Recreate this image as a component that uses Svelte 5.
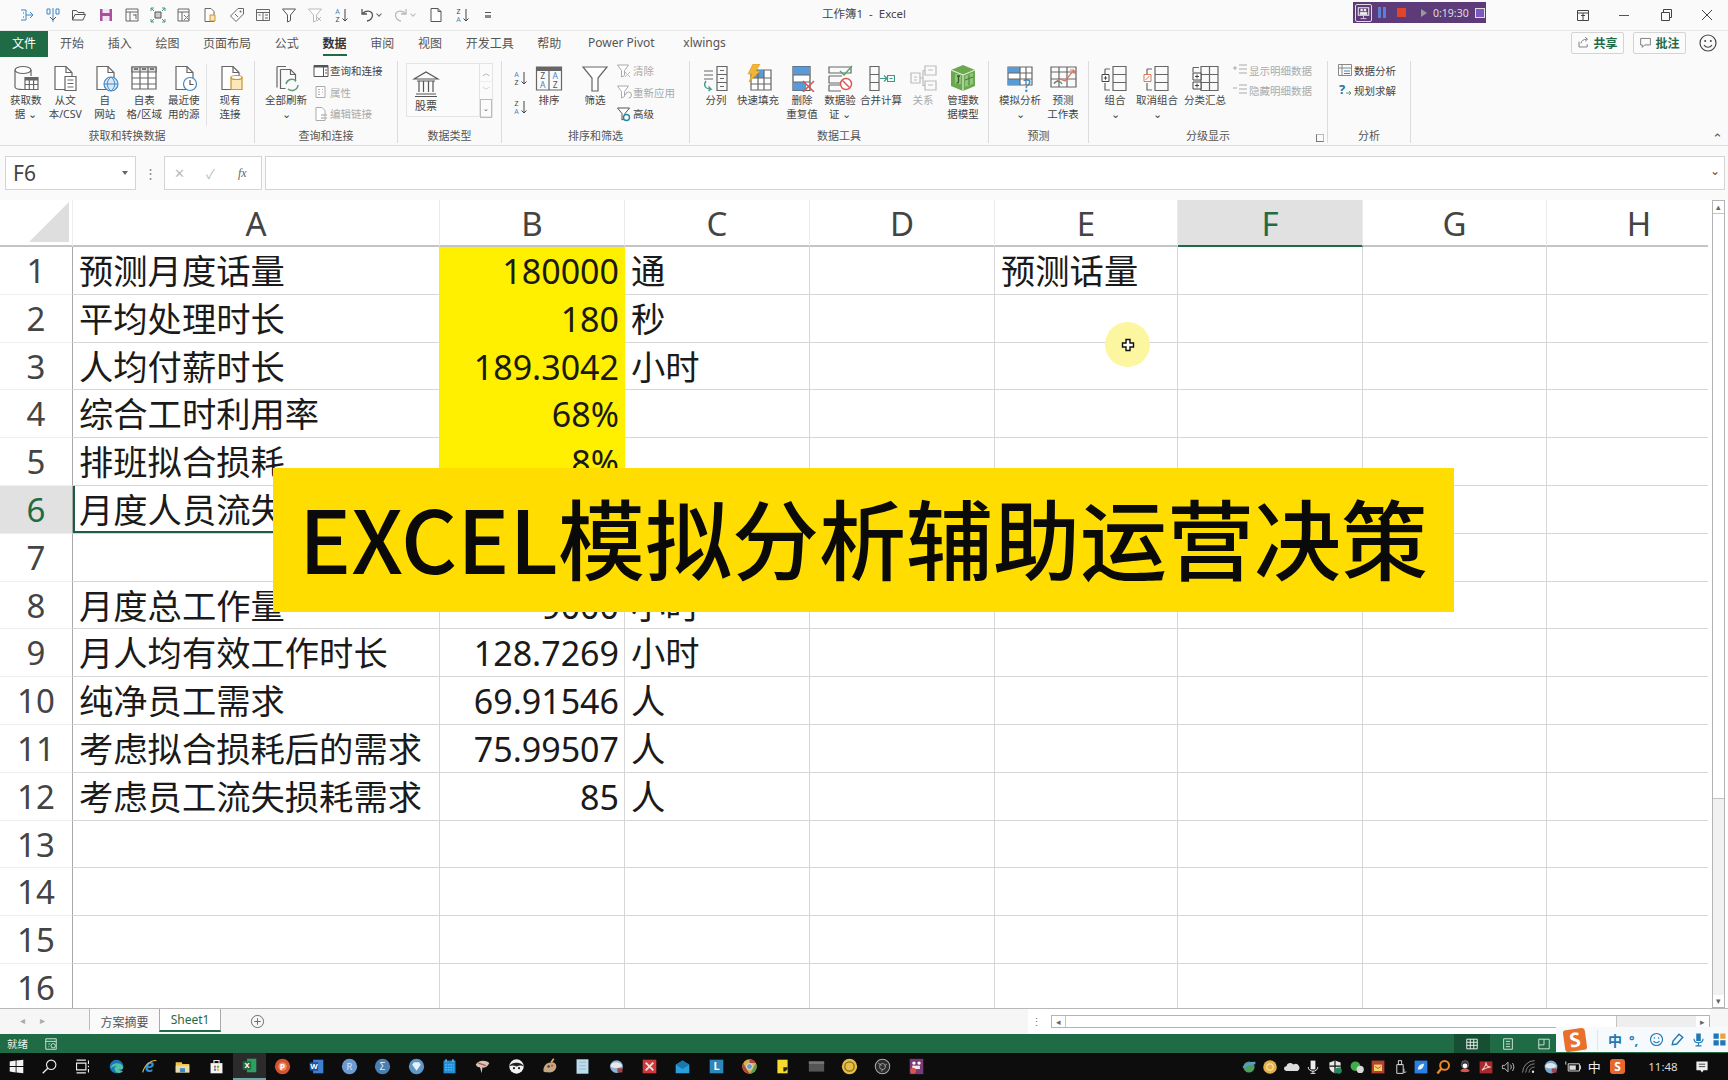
<script>
  const line = 'fill="none" stroke="#666" stroke-width="1.2"';
  const doc = `<path d="M6 2.5h11l6 6v17H6z" fill="#fff" stroke="#666" stroke-width="1.2"/><path d="M17 2.500v6h6" ${line}/>`;

  const lg = {
    getdata: `<ellipse cx="11" cy="6" rx="8" ry="3.500" fill="#fff" stroke="#666" stroke-width="1.2"/><path d="M3 6v17c0 1.500 3 2.500 8 2.500h2M19 6v6" ${line}/><path d="M13 13.500h13v12H13z" fill="#fff" stroke="#666" stroke-width="1.2"/><path d="M13 13.500h13v3H13z" fill="#666"/><path d="M13 20.500h13M17.300 16v9.500M21.600 16v9.500" ${line}/>`,
    text: `<path d="M4 2.500h11l6 6v17H4z" fill="#fff" stroke="#666" stroke-width="1.2"/><path d="M15 2.500v6h6" ${line}/><path d="M14 12.500h11v14H14z" fill="#fff" stroke="#666" stroke-width="1.200"/><path d="M16.500 16h6M16.500 19.500h6M16.500 23h6" ${line}/>`,
    web: `${doc}<circle cx="20" cy="20" r="7" fill="#dbe9f6" stroke="#3f88c5" stroke-width="1.200"/><path d="M13 20h14M20 13c-5 4-5 10 0 14M20 13c5 4 5 10 0 14" fill="none" stroke="#3f88c5" stroke-width="1"/>`,
    table: `<path d="M2 3h24v22H2z" fill="#fff" stroke="#666" stroke-width="1.200"/><path d="M2 3h24v5H2z" fill="#ddd" stroke="#666" stroke-width="1.200"/><path d="M2 14h24M2 20h24M10 3v22M18 3v22" ${line}/><path d="M4 5h4M12 5h4M20 5h4" stroke="#555" stroke-width="1.500"/>`,
    recent: `${doc}<circle cx="20" cy="20" r="6.500" fill="#fff" stroke="#3f88c5" stroke-width="1.200"/><path d="M20 16v4.500h3.500" fill="none" stroke="#555" stroke-width="1.200"/>`,
    existing: `${doc}<path d="M15 13.500h11v12H15z" fill="#fbe7b8" stroke="#c9962f" stroke-width="1.200"/><ellipse cx="20.500" cy="13.500" rx="5.500" ry="2" fill="#fff" stroke="#c9962f" stroke-width="1.200"/>`,
    refresh: `<path d="M5 2.500h9M5 2.500v21M8.500 5.500h10l5 5v7M8.500 5.500v19h5" ${line}/><path d="M18.500 5.500v5h5" ${line}/><path d="M14 20a6 6 0 0 1 10-3M26 21a6 6 0 0 1-10 4" fill="none" stroke="#5a9e6f" stroke-width="1.500"/>`,
    sort: `<path d="M1.500 3h25v23h-25zM1.500 6.500h25M14 6.500v19.500" ${line}/><path d="M1.500 3h25v3.500h-25z" fill="#666"/><text x="7.700" y="15" text-anchor="middle" font-size="8.500" font-family="Noto Sans" fill="#555">Z</text><text x="7.700" y="24" text-anchor="middle" font-size="8.500" font-family="Noto Sans" fill="#3f88c5">A</text><text x="20.300" y="15" text-anchor="middle" font-size="8.500" font-family="Noto Sans" fill="#3f88c5">A</text><text x="20.300" y="24" text-anchor="middle" font-size="8.500" font-family="Noto Sans" fill="#555">Z</text>`,
    filter: `<path d="M2 3h24L17 14v13h-6V14z" fill="#fff" stroke="#666" stroke-width="1.200"/>`,
    split: `<path d="M2 7h9M2 11h9M2 15h9" ${line}/><path d="M15 2.500h10v24H15zM15 10.500h10M15 18.500h10" ${line}/><path d="M18 6.500h4M18 14.500h4M18 22.500h4" stroke="#666" stroke-width="1"/><path d="M4 17c-3 4-1 8 5 8l-2.500-2.500M9 25l-2.500 2" fill="none" stroke="#3f9a86" stroke-width="1.300"/>`,
    flash: `<path d="M7 6h20v20H7z" fill="#fff" stroke="#666" stroke-width="1.200"/><path d="M7 6h13v8H7z" fill="#5b9bd5"/><path d="M7 14h20M7 20h20M14 6v20M20 6v20" ${line}/><path d="M9 0h7l-4 7h4L5 18l3-8H4z" fill="#f2b632" stroke="#d69a1b" stroke-width=".6"/>`,
    dedupe: `<path d="M5 2.500h17v24H5z" fill="#fff" stroke="#555" stroke-width="1.200"/><path d="M5 2.500h17v8.500H5zM5 18h13v8.500H5z" fill="#5b9bd5"/><path d="M5 11h17M5 18h17" ${line}/><path d="M15 17l11 11M26 17L15 28" stroke="#d9534f" stroke-width="1.500"/>`,
    validate: `<path d="M3 3h22v6H3zM3 12h13M3 12v7h13M3 21h13M3 21v6h12" ${line}/><path d="M14 7l4 4 8-9" fill="none" stroke="#5a9e6f" stroke-width="1.400"/><circle cx="20" cy="20" r="5.500" fill="#fff" stroke="#d9534f" stroke-width="1.400"/><path d="M16.500 16.500l7 7" stroke="#d9534f" stroke-width="1.400"/>`,
    consolidate: `<path d="M3 2.500h9v8H3zM3 10.500h9v8H3zM3 18.500h9v8H3z" ${line}/><path d="M13 14.500h7M17 11.500l3 3-3 3" fill="none" stroke="#3f9a86" stroke-width="1.200"/><path d="M20.500 11.500h7v6h-7zM22.500 14.500h3" fill="none" stroke="#3f9a86" stroke-width="1.200"/>`,
    relation: `<path d="M16 2h11v9H16zM16 17h11v9H16zM2 9h9v10H2zM11 14h3M14 6.500v15h2M14 6.500h2M19 6h5M19 21h5M5 13h3M5 16h3" fill="none" stroke="#bbb" stroke-width="1.200"/>`,
    model: `<path d="M14 1l12 5v16l-12 5-12-5V6z" fill="#6aa84f"/><path d="M2 6l12 5v16M26 6l-12 5" fill="none" stroke="#dcecd2" stroke-width="1.200"/><path d="M16 12l8-3v11l-8 3zM6 10h6v10H6z" fill="#93c47d"/><path d="M16 16l8-3M20 11v10" stroke="#3e7a2e" stroke-width="1"/><path d="M8 12h3M9.500 12v6c0 1-1 1-2 1" fill="none" stroke="#2e5c22" stroke-width="1.300"/>`,
    whatif: `<path d="M2 3h24v18H2z" fill="#fff" stroke="#666" stroke-width="1.200"/><path d="M2 3h12v6H2zM2 15h12v6H2z" fill="#5b9bd5"/><path d="M2 9h24M2 15h24M14 3v18M20 3v18" ${line}/><text x="21" y="28" text-anchor="middle" font-size="18" font-family="Noto Sans" fill="#3f88c5">?</text>`,
    forecast: `<path d="M2 3h25v20H2zM2 8h25M2 15h25M10 3v20M18 3v20" ${line}/><path d="M5 19l6-4 5 2 9-11" fill="none" stroke="#d9765f" stroke-width="1.200"/><path d="M25 6h-4M25 6v4" stroke="#d9765f" stroke-width="1.200"/><path d="M5 20c2-4 7-3 8 0" fill="none" stroke="#3f9a86" stroke-width="1.300"/>`,
    group: `<path d="M12 2.500h13v24H12zM12 10.500h13M12 18.500h13M4 5h5M4 5v9M4 19v7h5" ${line}/><path d="M1 10.500h7v7H1zM2.800 14h3.400M4.500 12.200v3.600" fill="#fff" stroke="#444" stroke-width="1"/>`,
    ungroup: `<path d="M12 2.500h13v24H12zM12 10.500h13M12 18.500h13M4 5h5M4 5v9M4 19v7h5" ${line}/><path d="M1 10.500h7v7H1z" fill="#fff" stroke="#d9765f" stroke-width="1"/><path d="M2.500 16l4-4" stroke="#d9765f" stroke-width="1"/>`,
    subtotal: `<path d="M10 2.500h17v24H10zM10 10.500h17M10 18.500h17M18.500 2.500v24M2 3.500h6M2 3.500v5" ${line}/><path d="M2 9h8v7H2zM2 18h8v7H2z" fill="#fff" stroke="#444" stroke-width="1"/><path d="M4 12.500h4M6 10.500v4M4 21.500h4M6 19.500v4" stroke="#444" stroke-width="1"/>`
  };

  const sm = {
    query: `<path d="M1 2.500h14v11H1z" fill="#fff" stroke="#555"/><path d="M1 2.500h14v2H1z" fill="#555"/><path d="M10.500 4v9M12 7h2M12 10h2" stroke="#555"/>`,
    props: `<path d="M3 2.500h9v11H3z" fill="#fff" stroke="#aaa"/><path d="M5 5.500h2M5 8h2M5 10.500h2M9 5.500h1M9 8h1" stroke="#aaa"/>`,
    links: `<path d="M3 1.500h6l3 3v10H3z" fill="#fff" stroke="#aaa"/><path d="M8 9h6M8 12h6" stroke="#bbb" stroke-width="1.500"/>`,
    clear: `<path d="M1.500 2h11l-4 5.500v5l-3 1.500V7.500z" fill="#fff" stroke="#aaa"/><path d="M9 9l5 5M14 9l-5 5" stroke="#bbb"/>`,
    reapply: `<path d="M1.500 2h11l-4 5.500v5l-3 1.500V7.500z" fill="#fff" stroke="#aaa"/><path d="M9.500 11a3 3 0 1 1 3 3" fill="none" stroke="#aaa"/>`,
    advanced: `<path d="M1.500 2h12l-4.500 5.500v5l-3 1.500V7.500z" fill="#fff" stroke="#555"/><circle cx="10.500" cy="11.500" r="3" fill="#fff" stroke="#1f8a9e" stroke-width="1.400"/>`,
    show: `<path d="M1 6h4M3 4v4M7 3h8M7 7h8M7 11h8" stroke="#aaa"/>`,
    hide: `<path d="M1 6h4M7 3h8M7 7h8M7 11h8" stroke="#aaa"/>`,
    analysis: `<path d="M1.500 2.500h13v11h-13zM5 2.500v11M1.500 6h13" fill="none" stroke="#888"/><path d="M7 8.500h6v1H7zM7 11h6v1H7z" fill="#3f88c5"/>`,
    solver: `<text x="5" y="12" text-anchor="middle" font-size="13" font-weight="700" font-family="Noto Sans" fill="#2f6fa8">?</text><path d="M9 11h5M12 9l2 2-2 2" fill="none" stroke="#5a9e6f"/>`
  };

  const azSort = `<text x="4.500" y="7" text-anchor="middle" font-size="7" font-family="Noto Sans" fill="#3f88c5">A</text><text x="4.500" y="14.500" text-anchor="middle" font-size="7" font-family="Noto Sans" fill="#444">Z</text><path d="M12 2v12M9.500 11.500l2.500 2.500 2.500-2.500" fill="none" stroke="#444"/>`;
  const zaSort = `<text x="4.500" y="7" text-anchor="middle" font-size="7" font-family="Noto Sans" fill="#444">Z</text><text x="4.500" y="14.500" text-anchor="middle" font-size="7" font-family="Noto Sans" fill="#3f88c5">A</text><path d="M12 2v12M9.500 11.500l2.500 2.500 2.500-2.500" fill="none" stroke="#444"/>`;

  const qat = [
    `<path d="M2 3h5v10H2M7 8h7M11 5l3 3-3 3" fill="none" stroke="#3f88c5"/><path d="M4 6h1M4 10h1" stroke="#555"/>`,
    `<path d="M8 1v14M2 2h3v5H2zM11 2h3v5h-3z" fill="none" stroke="#3f88c5"/><path d="M5 10l3 3 3-3" fill="none" stroke="#555"/>`,
    `<path d="M1.500 13V3.500h4l1.500 2h6v2M1.500 13h10.500l2.500-5.500H4z" fill="none" stroke="#555"/>`,
    `<path d="M2 2h12v12H2z" fill="#a8509f"/><path d="M4.500 2h7v4h-7zM4.500 9h7v5h-7z" fill="#f3e6f2"/>`,
    `<path d="M2 2h12v12H2zM2 5h12M6 5v9M9 8h3v4M12 8v-1" fill="none" stroke="#666"/>`,
    `<path d="M5 5h6v6H5z" fill="#ccc" stroke="#555"/><path d="M1 1l3 3M15 1l-3 3M1 15l3-3M15 15l-3-3M1 1v3M1 1h3M15 1v3M15 1h-3M1 15v-3M1 15h3M15 15v-3M15 15h-3" fill="none" stroke="#3f9a86"/>`,
    `<path d="M2 2h11v12H2zM2 5h11M6 5v9" fill="none" stroke="#666"/><path d="M8 8l5 5M13 8l-5 5" stroke="#3f88c5"/>`,
    `<path d="M3 1.500h6l3 3v10H3z" fill="#fff" stroke="#666"/><path d="M8 8h5v6H8z" fill="#fbe7b8" stroke="#c9962f"/>`,
    `<path d="M9 1.500h5.500V7L7 14.500 1.500 9z" fill="none" stroke="#666"/><circle cx="11.500" cy="4.500" r="1" fill="#666"/><path d="M6 7l3 3" stroke="#666"/>`,
    `<path d="M1.500 2.500h13v11h-13zM1.500 5.500h13M8 5.500v8M3.500 8h2M10 8h3M10 11h3" fill="none" stroke="#666"/>`,
    `<path d="M1.500 2h13L9.500 8v5.500l-3 1.500V8z" fill="#fff" stroke="#555"/>`,
    `<path d="M1.500 2h13L9.500 8v5.500l-3 1.500V8z" fill="#fff" stroke="#bbb"/><path d="M10 10l4 4M14 10l-4 4" stroke="#bbb"/>`,
    azSort
  ];
  const undo = `<path d="M3 2v5h5M3.500 7C6 3 13 3 13.500 8c.3 3-2.500 5.500-5.500 6" fill="none" stroke="#555" stroke-width="1.300"/>`;
  const redo = `<path d="M13 2v5H8M12.500 7C10 3 3 3 2.500 8c-.3 3 2.500 5.500 5.500 6" fill="none" stroke="#bbb" stroke-width="1.300"/>`;
  const newDoc = `<path d="M3 1.500h7l3 3v10H3zM10 1.500v3h3" fill="#fff" stroke="#555"/>`;
  const bank = `<path d="M2 10L14 3l12 7zM4 25h20M3 27.500h22M7 12v11M11.500 12v11M16.500 12v11M21 12v11M5 12h18" fill="none" stroke="#555" stroke-width="1.200"/>`;

  const tabs = ['开始', '插入', '绘图', '页面布局', '公式', '数据', '审阅', '视图', '开发工具', '帮助', 'Power Pivot', 'xlwings'];

  const groups = [
    { label: '获取和转换数据', width: 255, pad: 6, items: [
      { icon: 'getdata', text: '获取数', text2: '据 ⌄', w: 39.5 },
      { icon: 'text', text: '从文', text2: '本/CSV', w: 39.5 },
      { icon: 'web', text: '自', text2: '网站', w: 39.5 },
      { icon: 'table', text: '自表', text2: '格/区域', w: 39.5 },
      { icon: 'recent', text: '最近使', text2: '用的源', w: 39.5 },
      { kind: 'sep' },
      { icon: 'existing', text: '现有', text2: '连接', w: 41 }
    ] },
    { label: '查询和连接', width: 143, pad: 8, items: [
      { icon: 'refresh', text: '全部刷新', text2: '⌄', w: 46 },
      { kind: 'col', left: 4, rows: [
        { icon: 'query', text: '查询和连接' },
        { icon: 'props', text: '属性', off: true },
        { icon: 'links', text: '编辑链接', off: true }
      ] }
    ] },
    { label: '数据类型', width: 104, pad: 8, items: [{ kind: 'gallery' }] },
    { label: '排序和筛选', width: 188, pad: 8, items: [
      { kind: 'sortcol' },
      { icon: 'sort', text: '排序', w: 38 },
      { icon: 'filter', text: '筛选', w: 38, left: 8 },
      { kind: 'col', left: 2, rows: [
        { icon: 'clear', text: '清除', off: true },
        { icon: 'reapply', text: '重新应用', off: true },
        { icon: 'advanced', text: '高级' }
      ] }
    ] },
    { label: '数据工具', width: 299, pad: 10, items: [
      { icon: 'split', text: '分列', w: 32 },
      { icon: 'flash', text: '快速填充', w: 52 },
      { icon: 'dedupe', text: '删除', text2: '重复值', w: 36 },
      { icon: 'validate', text: '数据验', text2: '证 ⌄', w: 40 },
      { icon: 'consolidate', text: '合并计算', w: 42 },
      { icon: 'relation', text: '关系', w: 42, off: true },
      { icon: 'model', text: '管理数', text2: '据模型', w: 38 }
    ] },
    { label: '预测', width: 100, pad: 8, items: [
      { icon: 'whatif', text: '模拟分析', text2: '⌄', w: 46 },
      { icon: 'forecast', text: '预测', text2: '工作表', w: 40 }
    ] },
    { label: '分级显示', width: 239, pad: 8, launcher: true, items: [
      { icon: 'group', text: '组合', text2: '⌄', w: 36 },
      { icon: 'ungroup', text: '取消组合', text2: '⌄', w: 48 },
      { icon: 'subtotal', text: '分类汇总', w: 48 },
      { kind: 'col', left: 3, tight: true, rows: [
        { icon: 'show', text: '显示明细数据', off: true },
        { icon: 'hide', text: '隐藏明细数据', off: true }
      ] }
    ] },
    { label: '分析', width: 83, pad: 9, items: [
      { kind: 'col', tight: true, rows: [
        { icon: 'analysis', text: '数据分析' },
        { icon: 'solver', text: '规划求解' }
      ] }
    ] }
  ];

  const cols = ['A', 'B', 'C', 'D', 'E', 'F', 'G', 'H'];
  const rows = [
    ['预测月度话量', '180000', '通', '', '预测话量'],
    ['平均处理时长', '180', '秒'],
    ['人均付薪时长', '189.3042', '小时'],
    ['综合工时利用率', '68%'],
    ['排班拟合损耗', '8%'],
    ['月度人员流失率', '10%'],
    [],
    ['月度总工作量', '9000', '小时'],
    ['月人均有效工作时长', '128.7269', '小时'],
    ['纯净员工需求', '69.91546', '人'],
    ['考虑拟合损耗后的需求', '75.99507', '人'],
    ['考虑员工流失损耗需求', '85', '人'],
    [], [], [], []
  ];

  const t = (s, c = '#fff', size = 11, w = 700) =>
    `<text x="10" y="14" text-anchor="middle" font-size="${size}" font-weight="${w}" font-family="Noto Sans" fill="${c}">${s}</text>`;

  const taskbar = [
    `<path d="M2 4l7-1v6.500H2zM10 2.800L18 2v7.500h-8zM2 10.500h7V17l-7-1zM10 10.500h8V18l-8-1z" fill="#f2f2f2"/>`,
    `<circle cx="12" cy="8" r="5.500" fill="none" stroke="#eee" stroke-width="1.300"/><path d="M8 12l-6 6" stroke="#eee" stroke-width="1.500"/>`,
    `<path d="M3 6h11v8H3zM3 2.500h11M3 17.500h11M17 3v4M17 9v2M17 13v4" fill="none" stroke="#eee" stroke-width="1.300"/>`,
    `<circle cx="10" cy="10" r="8" fill="#1976b8"/><path d="M3 12c1-7 13-8 15-1 0 2-3 3-5 2 1 3 3 3 5 2-3 4-9 3-10-1-1-2 0-4 3-5-3 0-6 1-8 3z" fill="#4fc3a1"/>`,
    `<text x="10" y="17" text-anchor="middle" font-size="20" font-weight="700" font-style="italic" font-family="Noto Sans" fill="#2f8fd8">e</text><path d="M2 17C4 8 12 2 18 3" fill="none" stroke="#e8b93c" stroke-width="1.300"/>`,
    `<path d="M2 5h7l1 2h8v10H2z" fill="#f5c542"/><path d="M2 9h16v8H2z" fill="#e8dcae"/><path d="M7 12h6v5H7z" fill="#3f88c5"/>`,
    `<path d="M3 6h14v12H3z" fill="#f4f4f4"/><path d="M7 6V3h6v3" fill="none" stroke="#eee" stroke-width="1.300"/><path d="M7 9h2.500v2.500H7z" fill="#e8613c"/><path d="M10.500 9H13v2.500h-2.500z" fill="#6fb33f"/><path d="M7 12.500h2.500V15H7z" fill="#3f88c5"/><path d="M10.500 12.500H13V15h-2.500z" fill="#f2b632"/>`,
    `<path d="M7 2h11v16H7z" fill="#2f9e63"/><path d="M2 5h10v10H2z" fill="#1e6b45"/><text x="7" y="13.500" text-anchor="middle" font-size="9" font-weight="700" font-family="Noto Sans" fill="#fff">X</text>`,
    `<circle cx="10" cy="10" r="9" fill="#d2552f"/><circle cx="10" cy="10" r="5" fill="#f08a5d"/>${t('P', '#fff', 10)}`,
    `<path d="M6 2h12v16H6z" fill="#3f7fd0"/><path d="M2 5h10v10H2z" fill="#1d4f9e"/><text x="7" y="13.500" text-anchor="middle" font-size="9" font-weight="700" font-family="Noto Sans" fill="#fff">W</text>`,
    `<circle cx="10" cy="10" r="9" fill="#6d9bd1"/>${t('R', '#dbe7f5', 11, 400)}`,
    `<circle cx="10" cy="10" r="9" fill="#4a7fb0"/>${t('Σ', '#dbe7f5', 12, 400)}`,
    `<circle cx="10" cy="10" r="9" fill="#5f97c7"/><path d="M5 8l2-3h6l2 3-5 7z" fill="#e8f1f8"/>`,
    `<path d="M3 3h14v15H3z" fill="#1f8fd8"/><path d="M6 1.500v3M14 1.500v3" stroke="#9fd3f5" stroke-width="1.500"/><path d="M5 8h10M5 11h10M5 14h10" stroke="#8cc8f0" stroke-dasharray="2 1"/>`,
    `<path d="M2 8c3-6 12-6 16-2-2 5-6 6-8 5l-1 7-2-7c-2 0-4-1-5-3z" fill="#d9c3b8"/><path d="M5 6l9 3" stroke="#c0504d" stroke-width="1.500"/>`,
    `<circle cx="10" cy="10" r="8.500" fill="#f2f2f2"/><path d="M1.500 10C3 4 17 4 18.500 10c-3-2-5-1-8.500 0-3-1-5.500-2-8.500 0z" fill="#222"/><circle cx="7" cy="12" r="1.300" fill="#222"/><circle cx="13" cy="12" r="1.300" fill="#222"/>`,
    `<path d="M3 16c-1-6 3-11 10-11 3 0 5 2 5 5s-3 7-8 7c-3 0-6 0-7-1z" fill="#c4a882"/><circle cx="9" cy="10" r="1.500" fill="#444"/><circle cx="13" cy="9" r="1.500" fill="#d9534f"/><path d="M12 5l3-4" stroke="#e8b93c" stroke-width="2"/>`,
    `<path d="M3 1.500h14v17H3z" fill="#bcdcec"/><path d="M6 5h8M6 9h8M6 13h8" stroke="#8ab4c8"/>`,
    `<circle cx="10" cy="10" r="7.500" fill="#8fb4d6"/><path d="M3 8c4-4 10-4 14 1-4 3-9 4-14 1z" fill="#e8e8e8"/><path d="M11 12h6v5h-6z" fill="#a8404a"/>`,
    `<path d="M2 2h16v16H2z" fill="#d0383a"/><path d="M5.500 5.500l9 9M14.500 5.500l-9 9" stroke="#f7dcdc" stroke-width="2.200"/>`,
    `<path d="M2 8l8-5 8 5v10H2z" fill="#2b9fdc"/><path d="M2 8l8 5 8-5-8-5z" fill="#1a78b0"/>`,
    `<path d="M2 2h16v16H2z" fill="#2d87b8"/>${t('L', '#fff', 13)}`,
    `<circle cx="10" cy="10" r="8.500" fill="#d2b548"/><path d="M10 1.500a8.500 8.500 0 0 1 7.400 4.300H10zM2.500 6l4 7 4 5.500A8.500 8.500 0 0 1 2.500 6z" fill="#b5483c"/><path d="M17.500 6.500a8.500 8.500 0 0 1-7 12l4-7z" fill="#5a9e4f"/><circle cx="10" cy="10" r="3.500" fill="#6d9bd1" stroke="#e8e8e8"/>`,
    `<path d="M4 2h12v16H4z" fill="#f6dc2f"/><path d="M11 11h5v2l-3 3h-2z" fill="#222"/>`,
    `<path d="M1 4h18v12H1z" fill="#555"/><path d="M1 4h18v3H1z" fill="#777"/>`,
    `<circle cx="10" cy="10" r="9" fill="#e3bd45"/><circle cx="10" cy="10" r="5.500" fill="none" stroke="#8a6b1a" stroke-width="1.500"/>`,
    `<circle cx="10" cy="10" r="8.500" fill="#2c2c2c" stroke="#aaa" stroke-width="1.200"/><circle cx="10" cy="10" r="3.500" fill="none" stroke="#aaa"/><path d="M5 6l4 3M15 7l-3 3M9 16l1-3" stroke="#aaa"/>`,
    `<path d="M2 1h16v18H2z" fill="#7a3a78"/><circle cx="7" cy="6" r="2" fill="#fff"/><circle cx="13" cy="6" r="2" fill="#fff"/><path d="M5 9h9v4H5z" fill="#eee"/><circle cx="6" cy="15" r="3.500" fill="#d9534f"/>`
  ];

  const tray = [
    `<circle cx="10" cy="10" r="7" fill="#4f9e5a"/><path d="M3 11c4-5 10-6 15-6" stroke="#5b9bd5" stroke-width="3" fill="none"/>`,
    `<circle cx="10" cy="10" r="8.500" fill="#e3b04b"/><circle cx="10" cy="10" r="4" fill="none" stroke="#f7e2a8" stroke-width="1.500"/>`,
    `<path d="M3 15a3 3 0 0 1 0-6 5 5 0 0 1 9-2 4 4 0 0 1 5 8z" fill="#ddd"/>`,
    `<path d="M7 2h6v11H7z" fill="#eee"/><path d="M4 10c0 7 12 7 12 0M10 15v3M7 18h6" fill="none" stroke="#eee" stroke-width="1.200"/>`,
    `<path d="M10 2l7 2.500V10c0 4-3 6-7 8-4-2-7-4-7-8V4.500z" fill="#e8e8e8"/><path d="M10 2v16M3 9h14" stroke="#111" stroke-width="1.500"/><circle cx="14.500" cy="14.500" r="4" fill="#1f8a5a"/>`,
    `<circle cx="8" cy="9" r="6" fill="#3fae49"/><circle cx="14" cy="13" r="4.500" fill="#d8d8d8"/>`,
    `<path d="M2 2h16v16H2z" fill="#b8402f"/><path d="M5 7h10v8H5z" fill="#f5d36a"/><path d="M6 9l4 3 4-3" fill="none" stroke="#b8402f"/>`,
    `<path d="M6 7h8v11H6zM8 2h4v5H8z" fill="none" stroke="#ddd" stroke-width="1.200"/><path d="M15 12v5l3-1" fill="none" stroke="#ddd"/>`,
    `<path d="M2 2h16v16H2z" fill="#2a7fe0"/><path d="M6 13c0-4 3-7 8-7-1 5-3 8-8 7z" fill="#e8f2fc"/>`,
    `<circle cx="12" cy="8" r="5.500" fill="none" stroke="#e8892c" stroke-width="2.500"/><path d="M8 12l-5 6" stroke="#e8892c" stroke-width="3"/>`,
    `<ellipse cx="10" cy="7" rx="4.500" ry="5" fill="#333" stroke="#ccc" stroke-width=".5"/><ellipse cx="10" cy="8.500" rx="3" ry="3" fill="#fff"/><path d="M4 15c3-4 9-4 12 0-3 2-9 2-12 0z" fill="#d9534f"/>`,
    `<path d="M2 3h16v15H2z" fill="#a82a2a"/><path d="M5 14c3-3 5-7 5-10 0 4 2 6 6 6-4 0-7 2-11 4z" fill="none" stroke="#f5cccc" stroke-width="1.300"/>`,
    `<path d="M3 8h3l4-4v12l-4-4H3z" fill="none" stroke="#ddd"/><path d="M13 7c1.500 2 1.500 4 0 6M15.500 5c2.500 3 2.500 7 0 10" fill="none" stroke="#ddd"/>`,
    `<path d="M2 17a15 15 0 0 1 15-15M6 17A11 11 0 0 1 17 6M10 17a7 7 0 0 1 7-7" fill="none" stroke="#888" stroke-width="1.200"/><circle cx="15" cy="16" r="1.500" fill="#ddd"/>`,
    `<circle cx="10" cy="10" r="8" fill="#7ba7cc"/><path d="M3 8c4-4 10-4 14 1-4 3-9 4-14 1z" fill="#dfe8ef"/><path d="M11 12h6v5h-6z" fill="#a8404a"/>`,
    `<path d="M4 6h14v9H4zM18 8.500h1.500v4H18M1 3v4" fill="none" stroke="#ddd" stroke-width="1.200"/><path d="M5.500 8h8v5.500h-8z" fill="#ddd"/>`
  ];
</script>

<div class="app">
  <div class="titlebar">
    <div class="qat">
      {#each qat as q}
        <svg class="qat-icon" viewBox="0 0 16 16">{@html q}</svg>
      {/each}
      <span class="qat-wide"><svg viewBox="0 0 16 16">{@html undo}</svg><i class="caret"></i></span>
      <span class="qat-wide off"><svg viewBox="0 0 16 16">{@html redo}</svg><i class="caret"></i></span>
      <svg class="qat-icon" viewBox="0 0 16 16">{@html newDoc}</svg>
      <svg class="qat-icon" viewBox="0 0 16 16">{@html zaSort}</svg>
      <span class="qat-more"></span>
    </div>
    <div class="doc-title">工作簿1 &nbsp;-&nbsp; Excel</div>
    <div class="title-right">
      <div class="recorder">
        <svg class="rec-cam" viewBox="0 0 20 20"><path d="M3 3h14v10H3z" fill="none" stroke="#eee" stroke-width="1.400"/><circle cx="7.500" cy="6" r="1.800" fill="#eee"/><circle cx="12" cy="6" r="1.800" fill="#eee"/><path d="M5.500 9h9v3h-9zM10 14v3M6 17.500h8" fill="#eee" stroke="#eee"/></svg>
        <span class="rec-pause"><i></i><i></i></span>
        <span class="rec-stop"></span>
        <span class="rec-play"></span>
        <span class="rec-time">0:19:30</span>
        <span class="rec-menu"></span>
      </div>
      <div class="winbtns">
        <svg viewBox="0 0 16 16"><path d="M2.500 3.500h11v10h-11zM2.500 6h11M8 6v7.500M6 8.500h4" fill="none" stroke="#444"/></svg>
        <svg viewBox="0 0 16 16"><path d="M3 8.500h10" stroke="#555"/></svg>
        <svg viewBox="0 0 16 16"><path d="M3.500 5.500h8v8h-8zM5.500 5.500v-3h8v8h-2" fill="none" stroke="#444"/></svg>
        <svg viewBox="0 0 16 16"><path d="M3 3l10 10M13 3L3 13" stroke="#444"/></svg>
      </div>
    </div>
  </div>

  <div class="tabrow">
    <div class="file-tab">文件</div>
    <div class="tabs">
      {#each tabs as tab}
        <span class="tab" class:active={tab === '数据'} class:latin={tab === 'Power Pivot'} class:wings={tab === 'xlwings'}>{tab}</span>
      {/each}
    </div>
    <div class="tab-actions">
      <button class="act">
        <svg viewBox="0 0 16 16"><path d="M2.500 7v6.500h10V10M5 9c0-3 3-5 7-5M10 1.500L13 4l-3 2.500" fill="none" stroke="#666"/></svg>共享
      </button>
      <button class="act">
        <svg viewBox="0 0 16 16"><path d="M2 3h12v8H7l-3 3v-3H2z" fill="none" stroke="#666"/></svg>批注
      </button>
      <svg class="smile" viewBox="0 0 20 20"><circle cx="10" cy="10" r="8" fill="none" stroke="#444" stroke-width="1.200"/><circle cx="7.200" cy="8" r="1" fill="#444"/><circle cx="12.800" cy="8" r="1" fill="#444"/><path d="M6 12c2 3 6 3 8 0" fill="none" stroke="#444" stroke-width="1.200"/></svg>
    </div>
  </div>

  <div class="ribbon">
    {#each groups as g}
      <div class="group" style="width:{g.width}px">
        <div class="group-body" style="padding-left:{g.pad}px">
          {#each g.items as item}
            {#if item.kind === 'sep'}
              <span class="inner-sep"></span>
            {:else if item.kind === 'col'}
              <div class="small-col" class:tight={item.tight} style="margin-left:{item.left || 0}px">
                {#each item.rows as r}
                  <div class="small-item" class:off={r.off}>
                    <svg viewBox="0 0 16 16">{@html sm[r.icon]}</svg>
                    <span>{r.text}</span>
                  </div>
                {/each}
              </div>
            {:else if item.kind === 'gallery'}
              <div class="gallery">
                <div class="gallery-main">
                  <svg viewBox="0 0 28 28">{@html bank}</svg>
                  <span>股票</span>
                </div>
                <div class="gallery-scroll">
                  <span>︿</span><span class="faint">﹀</span><span class="more">⌄</span>
                </div>
              </div>
            {:else if item.kind === 'sortcol'}
              <div class="sort-col">
                <svg viewBox="0 0 16 16">{@html azSort}</svg>
                <svg viewBox="0 0 16 16">{@html zaSort}</svg>
              </div>
            {:else}
              <div class="large" class:off={item.off} style="width:{item.w}px; margin-left:{item.left || 0}px">
                <svg viewBox="0 0 28 28">{@html lg[item.icon]}</svg>
                <span>{item.text}</span>
                {#if item.text2}<span>{item.text2}</span>{/if}
              </div>
            {/if}
          {/each}
        </div>
        <div class="group-label">
          {g.label}
          {#if g.launcher}<span class="launcher"></span>{/if}
        </div>
      </div>
    {/each}
    <div class="collapse">⌃</div>
  </div>

  <div class="formula">
    <div class="namebox"><span>F6</span><i class="name-arrow"></i></div>
    <div class="f-dots">⋮</div>
    <div class="fx-box">
      <span class="fx-mark">✕</span><span class="fx-mark">✓</span><span class="fx">fx</span>
    </div>
    <div class="f-input"><span class="f-chev">⌄</span></div>
  </div>

  <div class="sheet">
    <div class="grid">
      <div class="corner"><span class="tri"></span></div>
      {#each cols as c}
        <div class="col-head" class:cur={c === 'F'}>{c}</div>
      {/each}
      {#each rows as row, i}
        <div class="row-head" class:cur={i === 5}>{i + 1}</div>
        {#each cols as c, j}
          <div
            class="cell"
            class:num={j === 1}
            class:fill={j === 1 && i < 6}
            class:sel={j === 0 && i === 5}
          >{row[j] || ''}</div>
        {/each}
      {/each}
    </div>
    <div class="vscroll">
      <span class="sb-btn">▴</span>
      <span class="sb-thumb"></span>
      <span class="sb-track"></span>
      <span class="sb-btn">▾</span>
    </div>
  </div>

  <div class="sheetbar">
    <div class="nav"><span>◂</span><span>▸</span></div>
    <div class="sheet-tab">方案摘要</div>
    <div class="sheet-tab on">Sheet1</div>
    <svg class="add" viewBox="0 0 16 16"><circle cx="8" cy="8" r="6.500" fill="none" stroke="#666"/><path d="M4.500 8h7M8 4.500v7" stroke="#666"/></svg>
    <div class="hscroll-wrap">
      <span class="h-dots">⋮</span>
      <div class="hscroll">
        <span class="sb-btn">◂</span>
        <span class="h-thumb"></span>
        <span class="h-track"></span>
        <span class="sb-btn">▸</span>
      </div>
    </div>
  </div>

  <div class="statusbar">
    <span class="ready">就绪</span>
    <svg class="macro" viewBox="0 0 16 16"><path d="M2 2h12v12H2zM2 5h12M5 8h2M5 11h1" fill="none" stroke="#dfeee6"/><circle cx="10.500" cy="10" r="2.500" fill="none" stroke="#dfeee6"/></svg>
    <div class="views">
      <span class="view now"><svg viewBox="0 0 16 16"><path d="M2 2.500h12v11H2zM2 6h12M2 9.500h12M6 2.500v11M10 2.500v11" fill="none" stroke="#fff"/></svg></span>
      <span class="view"><svg viewBox="0 0 16 16"><path d="M3 2h10v12H3zM5.500 5h5M5.500 8h5M5.500 11h5" fill="none" stroke="#dfeee6"/></svg></span>
      <span class="view"><svg viewBox="0 0 16 16"><path d="M2 2.500h12v11H2zM8 2.500v6.500H2" fill="none" stroke="#dfeee6"/></svg></span>
    </div>
  </div>

  <div class="taskbar">
    {#each taskbar as icon, i}
      <span class="tb-slot" class:running={i === 7}><svg viewBox="0 0 20 20">{@html icon}</svg></span>
    {/each}
    <div class="tray">
      {#each tray as icon}
        <span class="tray-slot"><svg viewBox="0 0 20 20">{@html icon}</svg></span>
      {/each}
      <span class="tray-slot ime">中</span>
      <span class="tray-s">S</span>
      <span class="clock">11:48</span>
      <svg class="notif" viewBox="0 0 20 20"><path d="M3 3h14v11h-5l-2 3-2-3H3z" fill="#eee"/><path d="M6 6.500h8M6 9.500h8" stroke="#222"/></svg>
    </div>
  </div>

  <!-- video overlay: title banner, cursor spot, IME bar -->
  <div class="banner">EXCEL模拟分析辅助运营决策</div>

  <div class="spot">
    <svg viewBox="0 0 14 14"><path d="M5 1.500h4V5h3.500v4H9v3.500H5V9H1.500V5H5z" fill="#fff" stroke="#111" stroke-width="1.400"/></svg>
  </div>

  <div class="ime-bar">
    <span class="ime-logo">S</span>
    <span class="ime-sep"></span>
    <span class="ime-zh">中</span>
    <span class="ime-punc">°,</span>
    <svg viewBox="0 0 20 20"><circle cx="10" cy="10" r="8" fill="none" stroke="#1f77b4" stroke-width="1.500"/><circle cx="7.200" cy="8" r="1" fill="#1f77b4"/><circle cx="12.800" cy="8" r="1" fill="#1f77b4"/><path d="M6 12c2 3 6 3 8 0" fill="none" stroke="#1f77b4" stroke-width="1.500"/></svg>
    <svg viewBox="0 0 20 20"><path d="M3 17l1-5 8-9 5 4-8 9z" fill="none" stroke="#1f77b4" stroke-width="1.800"/></svg>
    <svg viewBox="0 0 20 20"><path d="M7 2h6v10H7z" fill="#1f77b4"/><path d="M4 9c0 7 12 7 12 0M10 15v3M6 18.500h8" fill="none" stroke="#1f77b4" stroke-width="1.500"/></svg>
    <svg viewBox="0 0 20 20"><path d="M2 2h7v7H2zM2 11h7v7H2zM11 11h7v7h-7z" fill="#1f77b4"/><path d="M11 2h7v7h-7z" fill="#e8a33c"/></svg>
  </div>
</div>

<style>
  :global(body) {
    margin: 0;
    background: #fff;
  }

  .app {
    position: relative;
    width: 1728px;
    height: 1080px;
    overflow: hidden;
    display: flex;
    flex-direction: column;
    background: #fafafa;
    color: #444;
    font-family: 'Noto Sans', 'Noto Sans CJK SC', sans-serif;
    font-size: 11px;
  }

  /* title bar */
  .titlebar {
    height: 31px;
    flex: none;
    display: grid;
    grid-template-columns: 1fr auto 1fr;
    align-items: center;
    border-bottom: 1px solid #e8e8e8;
    box-sizing: border-box;
    background: #fafafa;
  }
  .qat { display: flex; align-items: center; padding-left: 14px; }
  .qat-icon { width: 16px; height: 16px; margin: 0 5.100px; flex: none; }
  .qat-wide { width: 34px; display: flex; align-items: center; gap: 2px; padding-left: 5px; box-sizing: border-box; flex: none; }
  .qat-wide svg { width: 16px; height: 16px; flex: none; }
  .caret { width: 3px; height: 3px; border-right: 1px solid #666; border-bottom: 1px solid #666; transform: rotate(45deg); margin-top: -2px; }
  .qat-wide.off .caret { border-color: #bbb; }
  .qat-more { width: 6px; height: 6px; margin-left: 10px; border-top: 1px solid #555; border-bottom: 3px solid #888; box-sizing: border-box; }
  .doc-title { font-size: 11.500px; color: #444; margin-top: -4px; }
  .title-right { display: flex; justify-content: flex-end; align-items: center; }
  .recorder {
    width: 133px;
    height: 21px;
    margin-right: 76px;
    margin-top: -5px;
    background: #5c3b78;
    display: flex;
    align-items: center;
    box-sizing: border-box;
    padding-left: 2px;
    color: #ddd;
  }
  .rec-cam { width: 17px; height: 18px; flex: none; border: 1px solid #ddd; border-radius: 2px; box-sizing: border-box; }
  .rec-pause { display: flex; gap: 2px; margin-left: 6px; }
  .rec-pause i { width: 3px; height: 11px; background: #5a7fd6; }
  .rec-stop { width: 9px; height: 9px; background: #e0452c; margin-left: 11px; }
  .rec-play { width: 0; height: 0; border-left: 6px solid #999; border-top: 4px solid transparent; border-bottom: 4px solid transparent; margin-left: 15px; }
  .rec-time { font-size: 10.500px; margin-left: 6px; color: #ddd; }
  .rec-menu { width: 8px; height: 8px; background: #7a5ac0; border: 1px solid #ddd; margin-left: 6px; }
  .winbtns { width: 166px; display: grid; grid-template-columns: repeat(4, 1fr); justify-items: center; }
  .winbtns svg { width: 16px; height: 16px; }

  /* tabs */
  .tabrow { height: 27px; flex: none; display: flex; align-items: stretch; background: #fafafa; }
  .file-tab {
    width: 48px;
    height: 26px;
    padding-bottom: 2px;
    box-sizing: border-box;
    background: #1e6b45;
    color: #fff;
    font-size: 12px;
    display: flex;
    align-items: center;
    justify-content: center;
  }
  .tabs { display: flex; align-items: center; gap: 23.700px; margin-left: 12px; font-size: 12px; padding-bottom: 4px; }
  .tab { position: relative; color: #555; white-space: nowrap; }
  .tab.latin { margin-left: 3px; }
  .tab.wings { margin-left: 5px; }
  .tab.active { font-weight: 700; color: #333; }
  .tab.active::after {
    content: '';
    position: absolute;
    left: 0;
    right: 0;
    bottom: -4px;
    height: 2px;
    background: #1e6b45;
  }
  .tab-actions { margin-left: auto; display: flex; align-items: center; gap: 9px; padding: 0 10px 4px 0; }
  .act {
    width: 53px;
    height: 22px;
    display: flex;
    align-items: center;
    justify-content: center;
    gap: 3px;
    padding: 0;
    background: #fbfbfb;
    border: 1px solid #d4d4d4;
    border-radius: 2px;
    color: #1e6b45;
    font: 700 12px 'Noto Sans CJK SC', sans-serif;
  }
  .act svg { width: 13px; height: 13px; }
  .smile { width: 20px; height: 20px; margin-left: 3px; }

  /* ribbon */
  .ribbon {
    height: 88px;
    flex: none;
    display: flex;
    position: relative;
    box-sizing: border-box;
    border-bottom: 1px solid #ddd;
    background: #fafafa;
  }
  .group {
    flex: none;
    display: flex;
    flex-direction: column;
    box-sizing: border-box;
    border-right: 1px solid #dcdcdc;
    margin-top: 3px;
    height: 82px;
  }
  .group-body { flex: 1; display: flex; align-items: flex-start; margin-top: -3px; }
  .group-label { height: 14px; line-height: 14px; text-align: center; color: #555; font-size: 11px; position: relative; }
  .launcher { position: absolute; right: 3px; top: 5px; width: 6px; height: 6px; border-left: 1px solid #777; border-bottom: 1px solid #777; border-top: 1px solid #bbb; border-right: 1px solid #bbb; }
  .large {
    flex: none;
    display: flex;
    flex-direction: column;
    align-items: center;
    padding-top: 6px;
    line-height: 14px;
    font-size: 10.500px;
    white-space: nowrap;
    color: #444;
  }
  .large svg { width: 28px; height: 28px; margin-bottom: 1px; flex: none; }
  .large.off { color: #aaa; }
  .inner-sep { width: 1px; height: 62px; margin: 6px 2.500px 0; background: #e2e2e2; flex: none; }
  .small-col { flex: none; padding-top: 2px; }
  .small-item { height: 21.500px; display: flex; align-items: center; white-space: nowrap; font-size: 10.500px; color: #444; gap: 1px; }
  .small-col.tight .small-item { height: 20px; }
  .small-item svg { width: 16px; height: 16px; flex: none; }
  .small-item.off { color: #aaa; }
  .gallery { width: 87px; height: 54px; margin-top: 5px; display: flex; border: 1px solid #e4e4e4; box-sizing: border-box; background: #fbfbfb; }
  .gallery-main { flex: 1; display: flex; flex-direction: column; align-items: flex-start; padding: 5px 0 0 5px; gap: 0; }
  .gallery-main svg { width: 28px; height: 28px; }
  .gallery-main span { padding-left: 3px; font-size: 11px; }
  .gallery-scroll { width: 12px; display: flex; flex-direction: column; border-left: 1px solid #e4e4e4; }
  .gallery-scroll span { flex: 1; font-size: 7px; line-height: 17px; text-align: center; color: #888; }
  .gallery-scroll .faint { color: #bbb; border-top: 1px solid #eee; }
  .gallery-scroll .more { border: 1px solid #bbb; color: #555; }
  .sort-col { width: 20px; display: flex; flex-direction: column; align-items: center; gap: 13px; padding-top: 12px; flex: none; }
  .sort-col svg { width: 16px; height: 16px; }
  .collapse { position: absolute; right: 5px; bottom: 0; font-size: 13px; line-height: 14px; color: #555; }

  /* formula bar */
  .formula { height: 34px; flex: none; margin-top: 10px; display: flex; align-items: stretch; padding-left: 5px; }
  .namebox, .fx-box, .f-input { background: #fff; border: 1px solid #d4d4d4; box-sizing: border-box; }
  .namebox { width: 131px; display: flex; align-items: center; justify-content: space-between; padding: 0 7px 0 7px; font-size: 21px; color: #444; }
  .name-arrow { width: 0; height: 0; border-top: 4px solid #666; border-left: 3.500px solid transparent; border-right: 3.500px solid transparent; }
  .f-dots { width: 28px; text-align: center; color: #888; line-height: 34px; font-size: 13px; }
  .fx-box { width: 98px; display: flex; align-items: center; gap: 18px; padding-left: 9px; color: #bbb; }
  .fx-mark { font-size: 13px; width: 14px; }
  .fx { font: italic 12px 'Liberation Serif', serif; color: #666; }
  .f-input { flex: none; width: 1460px; margin-left: 3px; display: flex; align-items: center; justify-content: flex-end; padding-right: 4px; }
  .f-chev { font-size: 12px; color: #555; margin-top: -5px; }

  /* sheet */
  .sheet { height: 808px; flex: none; margin-top: 10px; display: flex; background: #fff; }
  .grid {
    width: 1708px;
    flex: none;
    height: 100%;
    overflow: hidden;
    display: grid;
    grid-template-columns: 73px 367px 185px 185px 185px 183px 185px 184px 185px;
    grid-auto-rows: 47.800px;
    grid-template-rows: 47px;
    font-size: 34.300px;
    color: #1a1a1a;
    line-height: 48px;
  }
  .corner { display: flex; align-items: flex-end; justify-content: flex-end; padding: 0 3px 3px 0; border-bottom: 2px solid #c4c4c4; border-right: 1px solid #eee; box-sizing: border-box; }
  .tri { width: 40px; height: 40px; background: #dedede; clip-path: polygon(100% 0, 100% 100%, 0 100%); }
  .col-head {
    text-align: center;
    color: #444;
    border-right: 1px solid #eaeaea;
    border-bottom: 2px solid #c4c4c4;
    box-sizing: border-box;
    font-size: 33px;
    line-height: 47px;
  }
  .col-head.cur { background: #e1e1e1; color: #1e6b45; border-bottom-color: #1e6b45; }
  .row-head {
    text-align: center;
    color: #444;
    border-right: 1px solid #a8a8a8;
    border-bottom: 1px solid #eee;
    box-sizing: border-box;
    font-size: 33px;
  }
  .row-head.cur { background: #e1e1e1; color: #1e6b45; }
  .cell {
    border-right: 1px solid #d6d6d6;
    border-bottom: 1px solid #d6d6d6;
    box-sizing: border-box;
    padding: 0 6px;
    white-space: nowrap;
  }
  .cell.num { text-align: right; font-size: 34px; padding-right: 5px; }
  .cell.fill { background: #fff000; border-bottom-color: #fff000; border-right-color: #fff000; }
  .cell.sel { box-shadow: inset 2px 0 #1e5c40, inset 0 -2px #1e5c40; }

  .vscroll { width: 13px; margin-left: 4px; flex: none; display: flex; flex-direction: column; border: 1px solid #b4b4b4; box-sizing: border-box; }
  .sb-btn { display: block; width: 11px; height: 12px; text-align: center; font-size: 9px; line-height: 12px; color: #666; background: #fff; flex: none; }
  .sb-thumb { height: 586px; background: #fff; border: solid #c4c4c4; border-width: 1px 0; box-sizing: border-box; flex: none; }
  .sb-track { flex: 1; background: #f1f1f1; }

  .sheetbar { height: 26px; flex: none; display: flex; align-items: stretch; background: #f6f6f6; border-top: 1px solid #b8b8b8; box-sizing: border-box; }
  .nav { width: 90px; display: flex; align-items: center; gap: 15px; padding-left: 20px; box-sizing: border-box; color: #aaa; font-size: 10px; border-right: 1px solid #bbb; margin-bottom: 4px; }
  .sheet-tab { display: flex; align-items: center; justify-content: center; font-size: 12px; background: #fafafa; color: #555; width: 69px; }
  .sheet-tab.on { width: 62px; background: #fff; color: #1e6b45; border: solid #aaa; border-width: 0 1px 2px 1px; box-sizing: border-box; border-bottom-color: #1e6b45; margin-bottom: 2px; }
  .add { width: 15px; height: 15px; align-self: center; margin-left: 29px; }
  .hscroll-wrap { margin-left: auto; width: 682px; background: #fff; display: flex; align-items: center; margin-right: 18px; }
  .h-dots { width: 16px; color: #777; text-align: center; font-size: 11px; }
  .hscroll { flex: 1; height: 13px; margin-left: 7px; display: flex; border: 1px solid #b4b4b4; box-sizing: border-box; }
  .hscroll .sb-btn { width: 13px; height: 11px; line-height: 11px; }
  .h-thumb { flex: none; width: 552px; background: #fff; border: solid #c4c4c4; border-width: 0 1px; box-sizing: border-box; }
  .h-track { flex: 1; background: #eee; }

  .statusbar { height: 19px; flex: none; background: #1e6b45; color: #e6f2ec; display: flex; align-items: center; font-size: 10.500px; }
  .ready { margin-left: 7px; }
  .macro { width: 14px; height: 14px; margin-left: 16px; }
  .views { margin-left: auto; margin-right: 166px; display: flex; }
  .view { width: 36px; height: 19px; display: flex; align-items: center; justify-content: center; }
  .view.now { background: #174f35; }
  .view svg { width: 14px; height: 14px; }

  .taskbar { height: 27px; flex: none; background: #0d0d0d; display: flex; align-items: stretch; }
  .tb-slot { width: 33.200px; flex: none; display: flex; align-items: center; justify-content: center; box-sizing: border-box; }
  .tb-slot:nth-child(n + 4) { width: 33.330px; }
  .tb-slot svg { width: 17px; height: 17px; }
  .tb-slot.running { background: #2b2b2b; border-bottom: 2px solid #6aa8a8; }
  .tray { margin-left: auto; display: flex; align-items: center; padding-right: 18px; }
  .tray-slot { width: 21.600px; display: flex; align-items: center; justify-content: center; color: #eee; font-size: 13px; }
  .tray-slot svg { width: 16px; height: 16px; }
  .tray-s { width: 15px; height: 15px; margin: 0 5px; background: #e8682c; color: #fff; font: 700 12px/15px 'Noto Sans', sans-serif; text-align: center; border-radius: 3px; }
  .clock { width: 62px; text-align: center; color: #ddd; font-size: 11.500px; margin-left: 2px; }
  .notif { width: 16px; height: 16px; }

  /* overlays */
  .banner {
    position: absolute;
    left: 273px;
    top: 468px;
    width: 1181px;
    height: 144px;
    background: #ffdd00;
    color: #0a0a0a;
    font: 500 87px/137px 'Noto Sans CJK SC', sans-serif;
    text-align: center;
    white-space: nowrap;
  }
  .spot {
    position: absolute;
    left: 1105px;
    top: 322px;
    width: 45px;
    height: 45px;
    border-radius: 50%;
    background: #fdf6a0;
    display: flex;
    align-items: center;
    justify-content: center;
  }
  .spot svg { width: 14px; height: 14px; }
  .ime-bar {
    position: absolute;
    left: 1556px;
    top: 1027px;
    width: 172px;
    height: 25px;
    background: #f6fafd;
    display: flex;
    align-items: center;
    gap: 6px;
    box-sizing: border-box;
  }
  .ime-bar svg { width: 15px; height: 15px; flex: none; }
  .ime-logo {
    width: 22px;
    height: 22px;
    margin-left: 8px;
    background: #e9702c;
    color: #fff;
    font: 700 20px/22px 'Noto Sans', sans-serif;
    text-align: center;
    border-radius: 3px;
    transform: rotate(-8deg);
    flex: none;
  }
  .ime-sep { width: 1px; height: 20px; background: #dde5ea; margin-left: 5px; }
  .ime-zh { color: #1f77b4; font: 700 14px 'Noto Sans CJK SC', sans-serif; margin-left: 4px; }
  .ime-punc { color: #1f77b4; font-size: 13px; font-weight: 700; width: 14px; margin-left: 1px; }
</style>
